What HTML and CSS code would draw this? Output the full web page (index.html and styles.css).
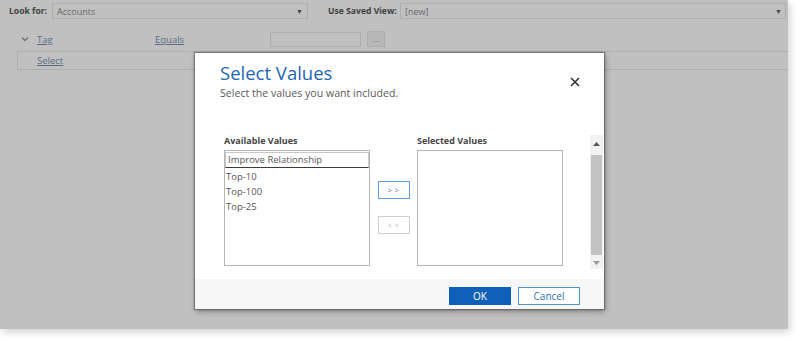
FILE: index.html
```html
<!DOCTYPE html>
<html>
<head>
<meta charset="utf-8">
<link rel="stylesheet" href="styles.css">
</head>
<body>
<div class="page">
  <div class="topbar">
    <span class="lbl">Look for:</span>
    <div class="sel sel-look"><span>Accounts</span><span class="arrow">&#9660;</span></div>
    <span class="lbl lbl-view">Use Saved View:</span>
    <div class="sel sel-view"><span>[new]</span><span class="arrow">&#9660;</span></div>
  </div>
  <div class="cond-row">
    <span class="chev"><svg width="8" height="6" viewBox="0 0 8 6"><path d="M1 1.5 L4 4.5 L7 1.5" fill="none" stroke="#6d6d6d" stroke-width="1.3"/></svg></span>
    <span class="link link-tag">Tag</span>
    <span class="link link-eq">Equals</span>
    <div class="val-input"></div>
    <div class="dots">...</div>
  </div>
  <div class="select-row"><span class="link">Select</span></div>
</div>

<div class="dialog">
  <div class="dlg-head">
    <div class="titles">
      <div class="title">Select Values</div>
      <div class="subtitle">Select the values you want included.</div>
    </div>
    <div class="close"><svg width="10" height="10" viewBox="0 0 10 10"><path d="M1 1 L9 9 M9 1 L1 9" stroke="#333" stroke-width="1.6"/></svg></div>
  </div>
  <div class="dlg-body">
    <div class="picker">
      <div class="col">
        <div class="col-lbl">Available Values</div>
        <div class="listbox">
          <div class="item item-focus">Improve Relationship</div>
          <div class="item">Top-10</div>
          <div class="item">Top-100</div>
          <div class="item">Top-25</div>
        </div>
      </div>
      <div class="movers">
        <div class="mv mv-add">&gt; &gt;</div>
        <div class="mv mv-rem">&lt; &lt;</div>
      </div>
      <div class="col">
        <div class="col-lbl">Selected Values</div>
        <div class="listbox"></div>
      </div>
    </div>
    <div class="scrollbar">
      <div class="sb-btn"><svg width="7" height="4" viewBox="0 0 7 4"><path d="M0 4 L3.5 0 L7 4Z" fill="#555"/></svg></div>
      <div class="sb-thumb"></div>
      <div class="sb-btn sb-down"><svg width="7" height="4" viewBox="0 0 7 4"><path d="M0 0 L3.5 4 L7 0Z" fill="#999"/></svg></div>
    </div>
  </div>
  <div class="dlg-foot">
    <div class="btn btn-ok">OK</div>
    <div class="btn btn-cancel">Cancel</div>
  </div>
</div>
</body>
</html>
```
FILE: styles.css
```css
html, body {
  margin: 0;
  padding: 0;
  background: #ffffff;
  width: 800px;
  height: 341px;
  overflow: hidden;
  font-family: "Open Sans", "Noto Sans", sans-serif;
}
.page {
  width: 788px;
  height: 329px;
  background: #c0c0c0;
  box-shadow: 2px 3px 8px rgba(0,0,0,0.18);
  overflow: hidden;
  box-sizing: border-box;
  padding-top: 3px;
}
.topbar {
  display: flex;
  align-items: center;
  height: 16px;
}
.lbl {
  font-size: 8.6px;
  font-weight: 700;
  color: #3f3f3f;
  margin-left: 9px;
  width: 43px;
  white-space: nowrap;
  flex: none;
}
.lbl-view {
  margin-left: 20px;
  width: 72px;
}
.sel {
  height: 16px;
  box-sizing: border-box;
  border: 1px solid #adadad;
  display: flex;
  align-items: center;
  justify-content: space-between;
  padding: 0 4px 0 4px;
  font-size: 9px;
  color: #686868;
  flex: none;
}
.sel-look { width: 256px; }
.sel-view { width: 386px; padding-right: 3px; }
.arrow { font-size: 7px; color: #444; }
.cond-row {
  display: flex;
  align-items: center;
  height: 16px;
  margin-top: 12px;
}
.chev { margin-left: 21px; width: 16px; display: flex; }
.link {
  font-size: 9.5px;
  color: #5b6b88;
  text-decoration: underline;
}
.link-tag { width: 118px; }
.link-eq { width: 115px; }
.val-input {
  width: 91px;
  height: 15px;
  box-sizing: border-box;
  border: 1px solid #adadad;
}
.dots {
  margin-left: 6px;
  width: 18px;
  height: 16px;
  box-sizing: border-box;
  border: 1px solid #adadad;
  background: #b8b8b8;
  font-size: 8px;
  color: #777;
  display: flex;
  align-items: center;
  justify-content: center;
  line-height: 1;
}
.select-row {
  margin-top: 4px;
  margin-left: 17px;
  height: 19px;
  box-sizing: border-box;
  border: 1px solid #adadad;
  border-right: none;
  display: flex;
  align-items: center;
  padding-left: 19px;
}

.dialog {
  position: absolute;
  left: 195px;
  top: 53px;
  width: 409px;
  height: 256px;
  background: #ffffff;
  box-shadow: 0 0 1px 1px rgba(60,60,60,0.45), 1px 2px 6px rgba(0,0,0,0.4);
  display: flex;
  flex-direction: column;
}
.dlg-head {
  height: 82px;
  box-sizing: border-box;
  padding: 7px 24px 0 25px;
  display: flex;
  justify-content: space-between;
  align-items: flex-start;
}
.title {
  font-size: 18.5px;
  color: #1d68b4;
  line-height: 26px;
}
.subtitle {
  font-size: 10.6px;
  color: #5a5a5a;
  line-height: 14px;
}
.close {
  margin-top: 17px;
  display: flex;
}
.dlg-body {
  height: 139px;
  display: flex;
  justify-content: space-between;
}
.picker {
  display: flex;
  padding-left: 29px;
}
.col {
  display: flex;
  flex-direction: column;
  width: 146px;
}
.col-lbl {
  font-size: 9px;
  font-weight: 700;
  color: #444;
  height: 15px;
  line-height: 12px;
}
.listbox {
  height: 116px;
  box-sizing: border-box;
  border: 1px solid #b5b5b5;
  padding-top: 1px;
}
.item {
  font-size: 9.5px;
  color: #555;
  height: 15px;
  line-height: 15px;
  padding-left: 1px;
}
.item-focus {
  height: 16px;
  box-sizing: border-box;
  border: 1px solid #c8c8c8;
  border-bottom: 1px solid #3c3c3c;
  margin: 0 0 1px 0;
  padding-left: 2px;
  line-height: 14px;
}
.movers {
  width: 47px;
  display: flex;
  flex-direction: column;
  align-items: center;
  padding-top: 46px;
  gap: 17px;
}
.mv {
  width: 32px;
  height: 18px;
  box-sizing: border-box;
  font-size: 7px;
  display: flex;
  align-items: center;
  justify-content: center;
  letter-spacing: 0.5px;
}
.mv-add {
  border: 1.5px solid #5d9ee0;
  color: #2f78c4;
}
.mv-rem {
  border: 1px solid #cfcfcf;
  color: #b3b3b3;
}
.scrollbar {
  width: 13px;
  height: 134px;
  margin-right: 1px;
  background: #f2f2f2;
  display: flex;
  flex-direction: column;
}
.sb-btn {
  height: 18px;
  display: flex;
  align-items: center;
  justify-content: center;
}
.sb-thumb {
  flex: 1;
  margin: 2px 1px;
  background: #c2c2c2;
}
.sb-down { height: 12px; }
.dlg-foot {
  margin-top: 5px;
  flex: 1;
  background: #f7f7f7;
  display: flex;
  justify-content: flex-end;
  align-items: flex-start;
  padding: 8px 24px 0 0;
  gap: 7px;
}
.btn {
  width: 62px;
  height: 18px;
  box-sizing: border-box;
  font-size: 10px;
  display: flex;
  align-items: center;
  justify-content: center;
}
.btn-ok {
  background: #1160b7;
  color: #fff;
}
.btn-cancel {
  background: #fff;
  border: 1.5px solid #4f93d8;
  color: #2e6fb5;
}
```
